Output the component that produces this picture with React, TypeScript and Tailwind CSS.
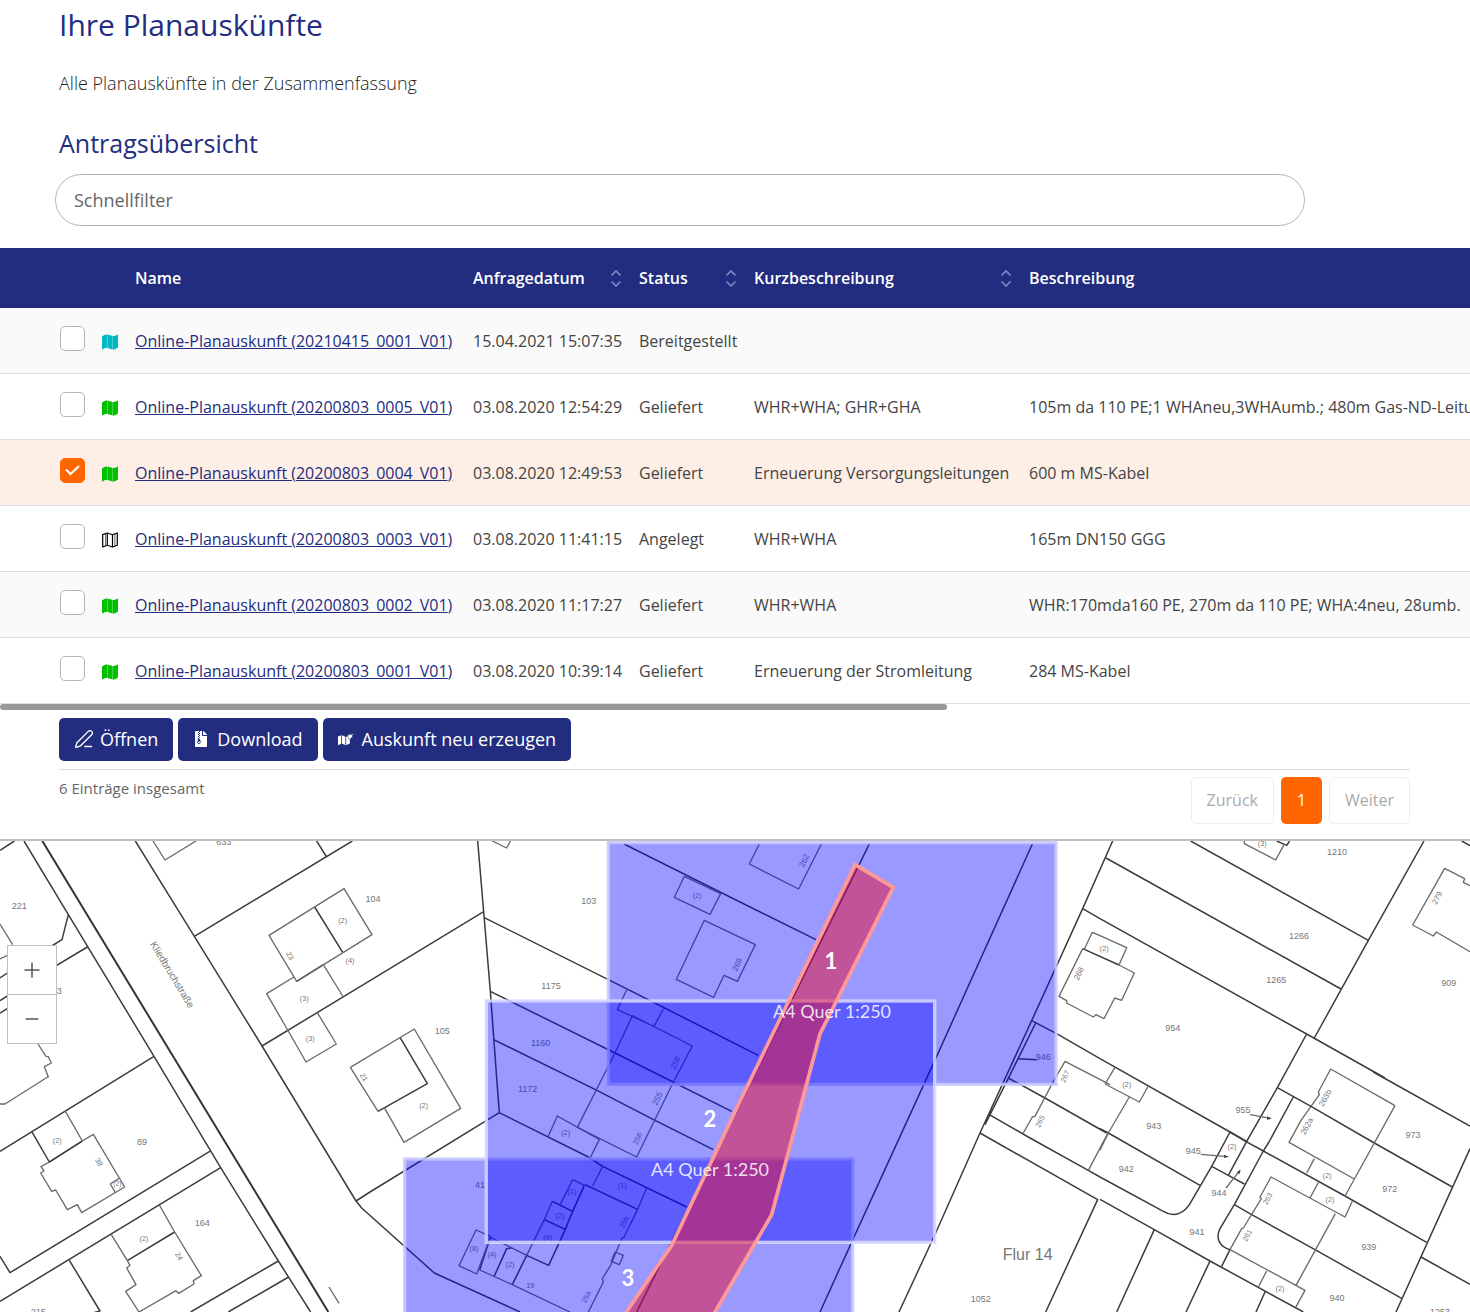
import { useState, type ReactNode } from 'react'
import { FaFileArchive } from 'react-icons/fa'
import { Minus, PenLine, Plus } from 'lucide-react'
import clsx from 'clsx'

type RequestStatus = 'Bereitgestellt' | 'Geliefert' | 'Angelegt'

interface PlanRequest {
  id: string
  date: string
  status: RequestStatus
  summary: string
  description: string
}

const REQUESTS: PlanRequest[] = [
  { id: '20210415_0001_V01', date: '15.04.2021 15:07:35', status: 'Bereitgestellt', summary: '', description: '' },
  { id: '20200803_0005_V01', date: '03.08.2020 12:54:29', status: 'Geliefert', summary: 'WHR+WHA; GHR+GHA', description: '105m da 110 PE;1 WHAneu,3WHAumb.; 480m Gas-ND-Leitung' },
  { id: '20200803_0004_V01', date: '03.08.2020 12:49:53', status: 'Geliefert', summary: 'Erneuerung Versorgungsleitungen', description: '600 m MS-Kabel' },
  { id: '20200803_0003_V01', date: '03.08.2020 11:41:15', status: 'Angelegt', summary: 'WHR+WHA', description: '165m DN150 GGG' },
  { id: '20200803_0002_V01', date: '03.08.2020 11:17:27', status: 'Geliefert', summary: 'WHR+WHA', description: 'WHR:170mda160 PE, 270m da 110 PE; WHA:4neu, 28umb.' },
  { id: '20200803_0001_V01', date: '03.08.2020 10:39:14', status: 'Geliefert', summary: 'Erneuerung der Stromleitung', description: '284 MS-Kabel' },
]

function StatusIcon({ status }: { status: RequestStatus }) {
  if (status === 'Angelegt') {
    return (
      <svg viewBox="0 0 16 16" className="size-4" fill="none" stroke="black" strokeWidth="1.2" strokeLinejoin="round">
        <path d="M.7 2.6 5.3 1v12.3L.7 15zM5.3 1l5.2 1.7V15l-5.2-1.7zM10.5 2.7 15.3 1v12.3L10.5 15z" />
        <path d="M3.6 1.6v12.3M12.9 1.8v12.3" strokeWidth=".6" />
      </svg>
    )
  }
  return (
    <svg
      viewBox="0 0 16 16"
      className={clsx('size-4', status === 'Geliefert' ? 'text-[#00c000]' : 'text-[#00b8c4]')}
      fill="currentColor"
    >
      <path d="M0 2.4Q2.5.3 5.2.5v13.3Q2.5 13.7 0 15.8zM5.5.5l5.1 1.6v13.5l-5.1-1.7zM10.9 2.1Q13.5 2 16 .2v13.4q-2.5 2-5.1 2.1z" />
    </svg>
  )
}

function SortIcon() {
  return (
    <svg viewBox="0 0 12 18" className="h-[18px] w-3 shrink-0" fill="none" stroke="#8089c4" strokeWidth="1.6">
      <path d="M1.5 6.5 6 2 10.5 6.5M1.5 12.5 6 17l4.5-4.5" />
    </svg>
  )
}

function HeaderCell({ label, sortable }: { label: string; sortable?: boolean }) {
  return (
    <th className="p-0 text-left font-semibold">
      <div className="flex items-center justify-between pr-[17px]">
        {label}
        {sortable && <SortIcon />}
      </div>
    </th>
  )
}

function MapRefreshIcon() {
  return (
    <svg viewBox="0 0 16 14" className="mr-2 h-3.5 w-4" fill="currentColor">
      <path d="M0 4.6 3.2 3.2v8.6L0 13.2zM4 3.2l3.4 1.6v8.4L4 11.6zM8.2 4.8l1.4-.6c.3 1.8 1 2.6 2.2 4v3.4l-3.6 1.6z" />
      <path d="m12 1.4.6 1.8 3-1.6-1.9 2.5 1 1.2-1.8.1-1.1 3-.8-2.6-1.6.2 1-1.6-1-1.2 1.9.1z" />
    </svg>
  )
}

function ActionButton({ icon, children }: { icon: ReactNode; children: ReactNode }) {
  return (
    <button type="button" className="flex h-[43px] items-center rounded-[5px] bg-[#232d80] px-[15px] pb-0.5 text-lg text-white">
      {icon}
      {children}
    </button>
  )
}

interface Label {
  x: number
  y: number
  text: string
  rotate?: number
  size?: number
}

interface Sheet {
  x: number
  y: number
  parcels: string
  buildings: string
  labels: Label[]
}

// Cadastral base map, split into sheets; three drawing units per screen pixel
const SHEETS: Sheet[] = [
  {
    x: 0,
    y: 0,
    parcels:
      'M72 9 205 230 462 655 662 989 835 1269 932 1422M406 9 583 295 786 624 1068 1089 1085 1110 1303 1305 1560 1422M0 37 43 9M950 9 978 54M583 295 1057 9M944 207 1028 343M786 624 1110 428 1451 221M205 230 186 305 150 327M262 327 140 400M462 655 0 940M0 420 22 405M0 488 22 474M0 525 22 512M890 430 970 380',
    buildings:
      'M459 9 495 66 588 9M807 292 1032 152 1116 290 890 430ZM882 417 800 467 863 576 918 672 1009 618 952 524M970 380 1028 474M0 258 38 320M0 363 22 352M112 615 138 655 145 656 154 675 133 686 145 717 143 717 15 798 0 798',
    labels: [
      { x: 58, y: 204, text: '221' },
      { x: 178, y: 458, text: '3' },
      { x: 671, y: 12, text: '633' },
      { x: 517, y: 410, text: 'Kliedbruchstraße', rotate: 59, size: 30 },
      { x: 1028, y: 248, text: '(2)', size: 22 },
      { x: 1050, y: 368, text: '(4)', size: 22 },
      { x: 913, y: 480, text: '(3)', size: 22 },
      { x: 931, y: 600, text: '(3)', size: 22 },
      { x: 870, y: 353, text: '23', rotate: 60, size: 22 },
      { x: 1119, y: 182, text: '104' },
    ],
  },
  {
    x: 0,
    y: 702,
    parcels:
      'M633 236 30 602 0 553M662 287 0 688M208 565 300 717 280 722M835 567 572 720M866 615 685 720M1068 387 1110 360 1498 122M95 178 148 270 247 207M382 566 524 480',
    buildings:
      'M195 116 247 207 280 187 374 345 245 422 232 398 202 413 167 354 155 358 122 303 132 297 123 284 148 270M356 320 331 336 346 362M334 488 382 566M478 399 524 480 604 611 580 626 582 636 536 664 528 656 417 720 377 658 408 638 380 588 390 580 382 566M987 645 1017 694',
    labels: [
      { x: 426, y: 209, text: '89' },
      { x: 172, y: 204, text: '(2)', size: 22 },
      { x: 297, y: 270, text: '38', rotate: 60, size: 22 },
      { x: 352, y: 334, text: '(2)', size: 20 },
      { x: 607, y: 452, text: '164' },
      { x: 432, y: 500, text: '(2)', size: 22 },
      { x: 537, y: 553, text: '24', rotate: 60, size: 22 },
      { x: 115, y: 720, text: '215' },
    ],
  },
  {
    x: 1110,
    y: 0,
    parcels:
      'M323 9 341 221 361 460 380 720 388 824M341 238 775 455 1165 652M361 460 735 645 1085 820M371 605 675 754 855 847 1030 935M762 18 1110 192 1338 305M90 598 172 737 24 820',
    buildings:
      'M367 9 410 30 421 9M943 115 1052 167 1020 229 913 178ZM1003 247 919 424 1031 478 1062 412 1102 430 1156 320ZM770 455 742 515 852 565 880 513M787 533 967 624 910 732 800 957 622 868 735 645ZM-59 688 133 573 272 811 102 913 43 809M-59 688 24 820',
    labels: [
      { x: 656, y: 190, text: '103' },
      { x: 543, y: 445, text: '1175' },
      { x: 217, y: 580, text: '105' },
      { x: 512, y: 615, text: '1160' },
      { x: -18, y: 718, text: '21', rotate: 60, size: 22 },
      { x: 161, y: 802, text: '(2)', size: 22 },
      { x: 982, y: 172, text: '(2)', size: 22 },
      { x: 1102, y: 380, text: '269', rotate: -65, size: 24 },
      { x: 917, y: 675, text: '258', rotate: -65, size: 24 },
    ],
  },
  {
    x: 1110,
    y: 702,
    parcels:
      'M388 122 655 255 698 283 950 405M645 338 803 412M643 340 608 418 586 472 536 580 470 550M523 443 586 472M470 550 427 638M362 493 329 594M425 527 410 530 373 612M547 388 608 418',
    buildings:
      'M535 192 562 132 688 202 662 255M698 283 668 342M830 348 803 412 762 495 755 500 730 560 722 580 697 620 700 630 655 720M643 340 608 323 571 397M547 388 523 443 470 550 360 495M735 540 760 550 748 578 724 568ZM318 474 362 493 320 606 267 581ZM329 594 427 638 600 720',
    labels: [
      { x: 473, y: 52, text: '1172' },
      { x: 863, y: 80, text: '255', rotate: -65, size: 24 },
      { x: 803, y: 200, text: '256', rotate: -65, size: 22 },
      { x: 587, y: 182, text: '(2)', size: 22 },
      { x: 330, y: 340, text: '41' },
      { x: 606, y: 358, text: '(1)', size: 22 },
      { x: 570, y: 430, text: '(2)', size: 22 },
      { x: 533, y: 495, text: '(9)', size: 22 },
      { x: 312, y: 530, text: '(8)', size: 22 },
      { x: 366, y: 548, text: '(4)', size: 22 },
      { x: 420, y: 578, text: '(2)', size: 22 },
      { x: 757, y: 340, text: '(1)', size: 22 },
      { x: 481, y: 641, text: '19', size: 22 },
      { x: 762, y: 450, text: '25b', rotate: -65, size: 22 },
      { x: 648, y: 675, text: '25a', rotate: -65, size: 22 },
    ],
  },
  {
    x: 2220,
    y: 0,
    parcels:
      'M388 18 350 95-310 1422M877 18 590 655 343 1195 240 1422M1118 9 1028 212 875 548 720 885 587 1185 477 1422M887 555 803 725 735 860M1028 212 1080 242M875 548 955 590 1080 662M805 720 915 780 1100 885M748 830 870 900 1045 997 1080 1017M720 885 1073 1085 917 1422M1028 332 1137 381M833 662 890 665',
    buildings:
      'M58 18 28 78 176 153 244 18M1032 335 1057 283 1080 293M1028 332 957 475 980 488 980 495 1060 537 1068 530 1092 542M975 670 1110 740M975 670 940 730 885 835 877 837 850 885M1045 997 1103 887',
    labels: [
      { x: 193, y: 68, text: '262', rotate: -65, size: 24 },
      { x: 910, y: 657, text: '946' },
      { x: 1093, y: 330, text: '(2)', size: 22 },
      { x: 1017, y: 407, text: '268', rotate: -65, size: 24 },
      { x: 975, y: 715, text: '267', rotate: -65, size: 22 },
      { x: 900, y: 850, text: '265', rotate: -65, size: 22 },
      { x: 863, y: 1250, text: 'Flur 14', size: 48 },
      { x: 722, y: 1382, text: '1052' },
    ],
  },
  {
    x: 3300,
    y: 0,
    parcels:
      'M18 60 723 453M272 9 805 307M972 9 805 307 643 600M0 242 620 588 855 720M620 588 532 749 440 910M530 9 560 22 569 9M1085 9 1110 23M0 662 390 882 437 910 490 939 735 1074 980 1213',
    buildings:
      'M433 9 433 17 527 66 551 22M1110 143 1090 133 1094 122 1034 91 938 261 1000 294 1009 282 1110 341M0 293 80 329 57 381 103 405 65 487 44 480 12 542M45 688 15 738M885 803 692 693 655 762 658 770 633 805 603 847 567 913 763 1023',
    labels: [
      { x: 711, y: 42, text: '1210' },
      { x: 597, y: 294, text: '1266' },
      { x: 529, y: 425, text: '1265' },
      { x: 1046, y: 436, text: '909' },
      { x: 218, y: 571, text: '954' },
      { x: 487, y: 15, text: '(3)', size: 22 },
      { x: 1012, y: 180, text: '279', rotate: -62, size: 24 },
    ],
  },
  {
    x: 3300,
    y: 702,
    parcels:
      'M820 0 1110 162M532 47 633 103 823 213 1057 345M580 75 507 210 490 237 403 398 360 470C345 500 360 525 390 533L365 583M390 180 335 283 385 310 440 208ZM385 310 433 336M403 398 455 428 645 533 905 679M1110 230 888 720M963 555 1110 637M0 382 163 473 50 720M163 473 330 567 258 720M330 567 610 720M495 660 468 720M0 170 25 183 300 340M0 315 190 418C225 440 255 420 270 395L335 283',
    buildings:
      'M885 101 735 372M643 260 620 303M655 332 630 378M757 388 735 435 513 315 480 375 484 380 430 468 425 470 390 533 615 655 587 706M706 425 588 640M500 597 475 645M15 36 118 90 145 42M88 75 25 183 0 235M450 128 512 139M302 247 383 254M378 348 420 295',
    labels: [
      { x: 429, y: 114, text: '955' },
      { x: 161, y: 162, text: '943' },
      { x: 280, y: 238, text: '945' },
      { x: 79, y: 291, text: '942' },
      { x: 357, y: 364, text: '944' },
      { x: 291, y: 481, text: '941' },
      { x: 939, y: 188, text: '973' },
      { x: 869, y: 352, text: '972' },
      { x: 806, y: 524, text: '939' },
      { x: 711, y: 678, text: '940' },
      { x: 1020, y: 720, text: '1253' },
      { x: 80, y: 37, text: '(2)', size: 22 },
      { x: 396, y: 222, text: '(2)', size: 22 },
      { x: 682, y: 311, text: '(2)', size: 22 },
      { x: 690, y: 383, text: '(2)', size: 22 },
      { x: 540, y: 650, text: '(2)', size: 22 },
      { x: 676, y: 78, text: '263b', rotate: -62, size: 24 },
      { x: 621, y: 163, text: '262a', rotate: -62, size: 24 },
      { x: 503, y: 380, text: '263', rotate: -62, size: 22 },
      { x: 442, y: 490, text: '261', rotate: -62, size: 22 },
    ],
  },
]

function PlanMap() {
  return (
    <svg
      viewBox="0 9 4410 1413"
      preserveAspectRatio="xMinYMin slice"
      className="block h-[471px] w-full"
      role="img"
      aria-label="Lageplan"
    >
      <path d="M127 9 985 1422" stroke="#333" strokeWidth="6" />
      {SHEETS.map((sheet, i) => (
        <g key={i} transform={`translate(${sheet.x} ${sheet.y})`} fill="none" strokeLinejoin="round">
          <path d={sheet.parcels} stroke="#3c3c3c" strokeWidth="4.5" />
          <path d={sheet.buildings} stroke="#6a6a6a" strokeWidth="4" />
          {sheet.labels.map((label, j) => (
            <text
              key={j}
              transform={`translate(${label.x} ${label.y}) rotate(${label.rotate ?? 0})`}
              fontSize={label.size ?? 27}
              textAnchor="middle"
              dominantBaseline="central"
              className="fill-[#777] font-['Liberation_Sans_Narrow','Liberation_Sans',sans-serif]"
            >
              {label.text}
            </text>
          ))}
        </g>
      ))}
      {/* arrow heads of the small parcel references */}
      <path d="M3815 842l-14-7v10zM3686 956l-14-6v10zM3722 995l-12 8 8 6z" fill="#444" />

      {/* print frames */}
      <g fill="#0000ff" fillOpacity="0.4" stroke="#c8c8ff" strokeOpacity="0.85" strokeWidth="10">
        <rect x="1214" y="963" width="1344" height="725" />
        <rect x="1825" y="14" width="1343" height="725" />
        <rect x="1459" y="489" width="1345" height="724" stroke="#d6d6ff" />
      </g>
      <path
        d="M2565 80 2680 148 2460 588 2315 1130 2120 1465H1850L2015 1222 2220 790Z"
        fill="#eb0e2d"
        fillOpacity="0.5"
        stroke="#ff9999"
        strokeWidth="11"
      />
      <g textAnchor="middle" fill="#ffffff" className="font-['Lato',sans-serif]">
        <g fontSize="66" fontWeight="700">
          <text x="2493" y="394">1</text>
          <text x="2130" y="868">2</text>
          <text x="1884" y="1343">3</text>
        </g>
        <g fontSize="54" fillOpacity="0.85">
          <text x="2496" y="541">A4 Quer 1:250</text>
          <text x="2130" y="1015">A4 Quer 1:250</text>
        </g>
      </g>
    </svg>
  )
}

export default function App() {
  const [selected, setSelected] = useState<string[]>(['20200803_0004_V01'])
  const [filter, setFilter] = useState('')

  const toggle = (id: string) => {
    setSelected(prev => (prev.includes(id) ? prev.filter(s => s !== id) : [...prev, id]))
  }

  const rows = REQUESTS.filter(r =>
    `${r.id} ${r.date} ${r.status} ${r.summary} ${r.description}`.toLowerCase().includes(filter.toLowerCase())
  )

  return (
    <main className="overflow-hidden bg-white font-['Open_Sans',sans-serif] text-[#444]">
      <header className="px-[59px]">
        <h1 className="text-3xl leading-[50px] text-[#232d80]">Ihre Planauskünfte</h1>
        <p className="mt-5 text-lg leading-[26px] font-light text-[#222]">Alle Planauskünfte in der Zusammenfassung</p>
        <h2 className="mt-7 text-[25px] leading-[38px] text-[#232d80]">Antragsübersicht</h2>
      </header>
      <div className="mt-3 mr-[165px] ml-[55px]">
        <input
          type="text"
          aria-label="Schnellfilter"
          placeholder="Schnellfilter"
          value={filter}
          onChange={e => setFilter(e.target.value)}
          className="block h-[52px] w-full rounded-full border border-[#b5b5b5] px-[18px] text-lg placeholder:text-[#666]"
        />
      </div>

      <div className="mt-[22px] overflow-hidden">
        <table className="w-full table-fixed border-separate border-spacing-0 text-base whitespace-nowrap">
          <colgroup>
            <col className="w-[102px]" />
            <col className="w-[33px]" />
            <col className="w-[338px]" />
            <col className="w-[166px]" />
            <col className="w-[115px]" />
            <col className="w-[275px]" />
            <col />
          </colgroup>
          <thead>
            <tr className="h-[60px] bg-[#232d80] text-white">
              <td />
              <td />
              <HeaderCell label="Name" />
              <HeaderCell label="Anfragedatum" sortable />
              <HeaderCell label="Status" sortable />
              <HeaderCell label="Kurzbeschreibung" sortable />
              <HeaderCell label="Beschreibung" />
            </tr>
          </thead>
          <tbody>
            {rows.map(row => {
              const checked = selected.includes(row.id)
              return (
                <tr
                  key={row.id}
                  className={clsx(
                    'h-[66px] [&>td]:border-b [&>td]:border-[#dedede]',
                    checked ? 'bg-[#fdefe6]' : 'bg-white first:bg-[#fafafa] nth-5:bg-[#fafafa]'
                  )}
                >
                  <td className="p-0 pb-1 pl-[60px]">
                    <span className="grid size-[25px] place-items-center">
                      <input
                        type="checkbox"
                        aria-label={`Online-Planauskunft (${row.id}) auswählen`}
                        checked={checked}
                        onChange={() => toggle(row.id)}
                        className="size-[25px] appearance-none rounded-[5px] border border-[#b5b5b5] bg-white [grid-area:1/1] checked:border-[#ff6600] checked:bg-[#ff6600]"
                      />
                      {checked && (
                        <svg viewBox="0 0 15 11" className="pointer-events-none h-[11px] w-[15px] [grid-area:1/1]" fill="none" stroke="white" strokeWidth="2">
                          <path d="m1 4.5 4.5 4.5L14 1" />
                        </svg>
                      )}
                    </span>
                  </td>
                  <td className="p-0 pt-[3px]">
                    <StatusIcon status={row.status} />
                  </td>
                  <td className="p-0">
                    <a href={`#${row.id}`} className="text-[#232d80] underline">
                      Online-Planauskunft ({row.id})
                    </a>
                  </td>
                  <td className="p-0">{row.date}</td>
                  <td className="p-0">{row.status}</td>
                  <td className="p-0">{row.summary}</td>
                  <td className="p-0">{row.description}</td>
                </tr>
              )
            })}
          </tbody>
        </table>
        <div className="h-1.5 w-[947px] rounded-full bg-[#999]" />
      </div>

      <section className="mr-[60px] ml-[59px] mt-2">
        <div className="flex gap-[5px] border-b border-[#dedede] pb-2">
          <ActionButton icon={<PenLine className="mr-1.5 size-5" strokeWidth={1.6} />}>Öffnen</ActionButton>
          <ActionButton icon={<FaFileArchive className="mr-2 size-4" />}>Download</ActionButton>
          <ActionButton icon={<MapRefreshIcon />}>Auskunft neu erzeugen</ActionButton>
        </div>
        <div className="flex items-start justify-between pt-[7px] pb-[15px]">
          <p className="text-[15px] leading-[22px] text-[#666]">6 Einträge insgesamt</p>
          <nav aria-label="Seiten" className="flex gap-[7px] text-base">
            <button type="button" disabled className="h-[47px] rounded-[5px] border border-[#eee] px-[15px] pb-0.5 text-[#aaa]">
              Zurück
            </button>
            <button type="button" aria-current="page" className="h-[47px] w-[41px] rounded-[5px] bg-[#ff6600] pb-0.5 text-white">
              1
            </button>
            <button type="button" disabled className="h-[47px] rounded-[5px] border border-[#eee] px-[15px] pb-0.5 text-[#aaa]">
              Weiter
            </button>
          </nav>
        </div>
      </section>

      <section className="relative border-t-2 border-[#bfbfbf]">
        <PlanMap />
        <div className="absolute top-[104px] left-[7px] flex w-[50px] flex-col divide-y divide-[#bfbfbf] border border-[#bfbfbf] bg-white text-[#555]">
          <button type="button" aria-label="Vergrößern" className="grid h-[49px] place-items-center">
            <Plus className="size-6" strokeWidth={1.5} />
          </button>
          <button type="button" aria-label="Verkleinern" className="grid h-12 place-items-center">
            <Minus className="size-5" strokeWidth={2} />
          </button>
        </div>
      </section>
    </main>
  )
}
